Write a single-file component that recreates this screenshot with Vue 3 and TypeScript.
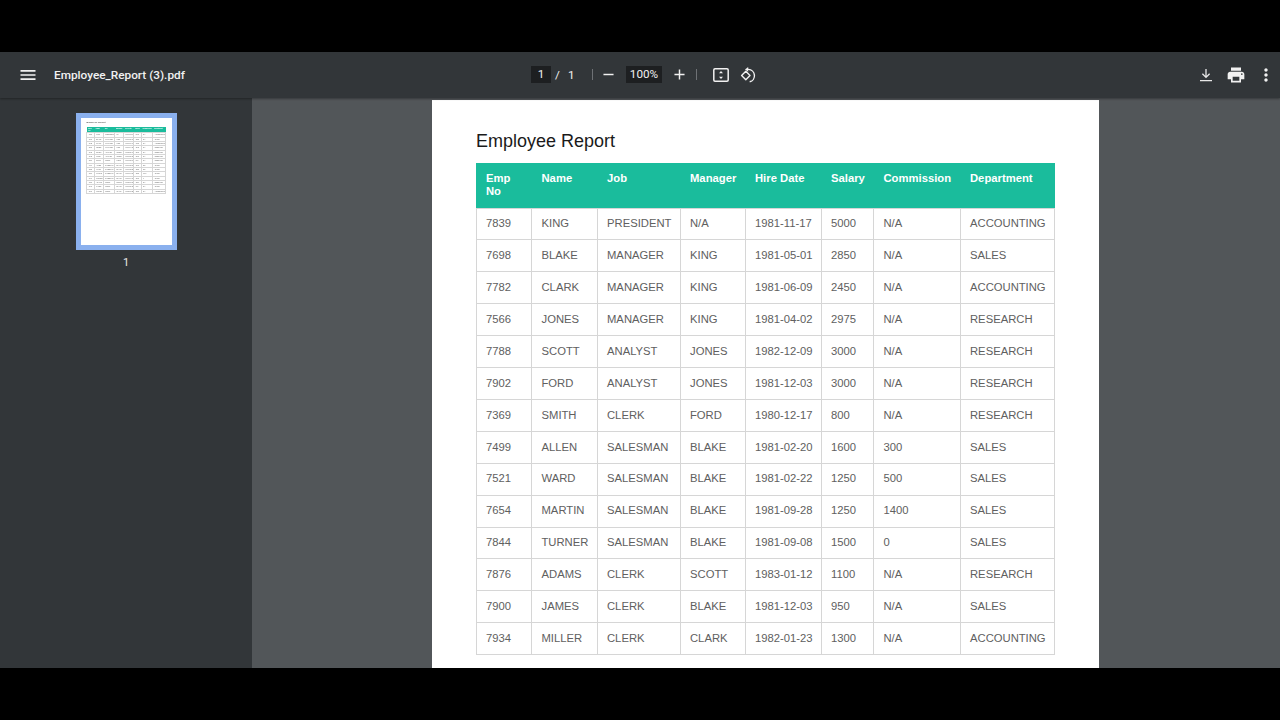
<script setup lang="ts">
interface Emp { no: number; name: string; job: string; mgr: string; date: string; sal: number; com: string; dept: string }
const headers: string[] = ['Emp No', 'Name', 'Job', 'Manager', 'Hire Date', 'Salary', 'Commission', 'Department']
const rows: Emp[] = [
  { no: 7839, name: 'KING', job: 'PRESIDENT', mgr: 'N/A', date: '1981-11-17', sal: 5000, com: 'N/A', dept: 'ACCOUNTING' },
  { no: 7698, name: 'BLAKE', job: 'MANAGER', mgr: 'KING', date: '1981-05-01', sal: 2850, com: 'N/A', dept: 'SALES' },
  { no: 7782, name: 'CLARK', job: 'MANAGER', mgr: 'KING', date: '1981-06-09', sal: 2450, com: 'N/A', dept: 'ACCOUNTING' },
  { no: 7566, name: 'JONES', job: 'MANAGER', mgr: 'KING', date: '1981-04-02', sal: 2975, com: 'N/A', dept: 'RESEARCH' },
  { no: 7788, name: 'SCOTT', job: 'ANALYST', mgr: 'JONES', date: '1982-12-09', sal: 3000, com: 'N/A', dept: 'RESEARCH' },
  { no: 7902, name: 'FORD', job: 'ANALYST', mgr: 'JONES', date: '1981-12-03', sal: 3000, com: 'N/A', dept: 'RESEARCH' },
  { no: 7369, name: 'SMITH', job: 'CLERK', mgr: 'FORD', date: '1980-12-17', sal: 800, com: 'N/A', dept: 'RESEARCH' },
  { no: 7499, name: 'ALLEN', job: 'SALESMAN', mgr: 'BLAKE', date: '1981-02-20', sal: 1600, com: '300', dept: 'SALES' },
  { no: 7521, name: 'WARD', job: 'SALESMAN', mgr: 'BLAKE', date: '1981-02-22', sal: 1250, com: '500', dept: 'SALES' },
  { no: 7654, name: 'MARTIN', job: 'SALESMAN', mgr: 'BLAKE', date: '1981-09-28', sal: 1250, com: '1400', dept: 'SALES' },
  { no: 7844, name: 'TURNER', job: 'SALESMAN', mgr: 'BLAKE', date: '1981-09-08', sal: 1500, com: '0', dept: 'SALES' },
  { no: 7876, name: 'ADAMS', job: 'CLERK', mgr: 'SCOTT', date: '1983-01-12', sal: 1100, com: 'N/A', dept: 'RESEARCH' },
  { no: 7900, name: 'JAMES', job: 'CLERK', mgr: 'BLAKE', date: '1981-12-03', sal: 950, com: 'N/A', dept: 'SALES' },
  { no: 7934, name: 'MILLER', job: 'CLERK', mgr: 'CLARK', date: '1982-01-23', sal: 1300, com: 'N/A', dept: 'ACCOUNTING' },
]
</script>

<template>
  <div class="screen">
    <div class="letterbox"></div>
    <header class="toolbar">
      <div class="left">
        <svg class="menu" viewBox="0 0 24 24" width="20" height="20"><path fill="#f1f1f1" d="M3 18h18v-2H3v2zm0-5h18v-2H3v2zm0-7v2h18V6H3z"/></svg>
        <span class="title">Employee_Report (3).pdf</span>
      </div>
      <div class="center">
        <span class="box page-box">1</span>
        <span class="slash">/</span>
        <span class="total">1</span>
        <span class="sep sep-a"></span>
        <svg class="minus" viewBox="0 0 12 12" width="11" height="11"><path d="M.5 6h11" stroke="#f1f1f1" stroke-width="1.6"/></svg>
        <span class="box zoom-box">100%</span>
        <svg class="plus" viewBox="0 0 12 12" width="11" height="11"><path d="M.5 6h11M6 .5v11" stroke="#f1f1f1" stroke-width="1.6"/></svg>
        <span class="sep sep-b"></span>
        <svg class="fit" viewBox="0 0 16 14" width="16" height="14">
          <rect x=".8" y=".8" width="14.4" height="12.4" rx="1.2" fill="none" stroke="#f1f1f1" stroke-width="1.5"/>
          <path d="M8 3l2 2.2H6zM8 11l2-2.2H6z" fill="#f1f1f1"/>
        </svg>
        <svg class="rotate" viewBox="0 0 16 16" width="16" height="16">
          <path d="M5.800 4.300 10 8.500 5.800 12.700 1.600 8.500z" fill="none" stroke="#f1f1f1" stroke-width="1.400" stroke-linejoin="round"/>
          <path d="M7 2.400h1.500a6.300 6.300 0 0 1 1.200 12.400" fill="none" stroke="#f1f1f1" stroke-width="1.400"/>
          <path d="M8.200 0 5 2.400 8.200 4.800z" fill="#f1f1f1"/>
        </svg>
      </div>
      <div class="right">
        <svg class="download" viewBox="0 0 14 14" width="14" height="14">
          <path d="M7 1v8M3.400 5.800 7 9.400l3.600-3.600M1 12.600h12" fill="none" stroke="#e8e8e8" stroke-width="1.300"/>
        </svg>
        <svg class="print" viewBox="0 0 24 24" width="20" height="20"><path fill="#f1f1f1" d="M19 8H5c-1.660 0-3 1.340-3 3v6h4v4h12v-4h4v-6c0-1.660-1.340-3-3-3zm-3 11H8v-5h8v5zm3-7c-.55 0-1-.45-1-1s.45-1 1-1 1 .45 1 1-.45 1-1 1zm-1-9H6v4h12V3z"/></svg>
        <svg class="more" viewBox="0 0 24 24" width="20" height="20"><path fill="#f1f1f1" d="M12 8c1.100 0 2-.9 2-2s-.9-2-2-2-2 .9-2 2 .9 2 2 2zm0 2c-1.100 0-2 .9-2 2s.9 2 2 2 2-.9 2-2-.9-2-2-2zm0 6c-1.100 0-2 .9-2 2s.9 2 2 2 2-.9 2-2-.9-2-2-2z"/></svg>
      </div>
    </header>
    <div class="body">
      <aside class="sidebar">
        <div class="thumb-frame">
          <div class="thumb-clip">
            <div class="sheet thumb-sheet">
              <h1>Employee Report</h1>
              <table>
                <thead><tr><th v-for="h in headers" :key="h">{{ h }}</th></tr></thead>
                <tbody>
                  <tr v-for="r in rows" :key="r.no">
                    <td>{{ r.no }}</td><td>{{ r.name }}</td><td>{{ r.job }}</td><td>{{ r.mgr }}</td><td>{{ r.date }}</td><td>{{ r.sal }}</td><td>{{ r.com }}</td><td>{{ r.dept }}</td>
                  </tr>
                </tbody>
              </table>
            </div>
          </div>
        </div>
        <div class="thumb-num">1</div>
      </aside>
      <main class="viewer">
        <div class="sheet page">
          <h1>Employee Report</h1>
          <table>
            <thead><tr><th v-for="h in headers" :key="h">{{ h }}</th></tr></thead>
            <tbody>
              <tr v-for="r in rows" :key="r.no">
                <td>{{ r.no }}</td><td>{{ r.name }}</td><td>{{ r.job }}</td><td>{{ r.mgr }}</td><td>{{ r.date }}</td><td>{{ r.sal }}</td><td>{{ r.com }}</td><td>{{ r.dept }}</td>
              </tr>
            </tbody>
          </table>
        </div>
      </main>
    </div>
    <div class="letterbox bottom"></div>
  </div>
</template>

<style>
html, body { margin: 0; background: #000; }
</style>

<style scoped>
.screen { width: 1280px; height: 720px; display: flex; flex-direction: column; background: #000; overflow: hidden; }
.letterbox { height: 52px; flex: none; background: #000; }
.toolbar {
  flex: none; height: 46px; padding-bottom: 1px; box-sizing: border-box; background: #323639; display: flex; align-items: center;
  font-family: Roboto, "Liberation Sans", sans-serif; color: #f1f1f1;
  box-shadow: 0 1px 2px rgba(0,0,0,.35); position: relative; z-index: 2;
}
.left { width: 531px; flex: none; display: flex; align-items: center; padding-left: 17.500px; box-sizing: border-box; }
.menu { flex: none; }
.title { margin-left: 16.500px; font-size: 11.800px; font-weight: 500; white-space: nowrap; }
.center { display: flex; align-items: center; flex: none; font-size: 11.700px; }
.box { background: #1d1f21; height: 17px; line-height: 17px; text-align: center; display: block; }
.page-box { width: 20px; }
.slash { margin-left: 4px; width: 5px; }
.total { margin-left: 8px; width: 6px; }
.sep { width: 1px; height: 11px; background: #6e7175; }
.sep-a { margin-left: 18px; }
.minus { margin-left: 10px; }
.zoom-box { margin-left: 12px; width: 36px; }
.plus { margin-left: 12px; }
.sep-b { margin-left: 11px; }
.fit { margin-left: 16px; }
.rotate { margin-left: 11px; }
.right { margin-left: auto; display: flex; align-items: center; padding-right: 4px; }
.print { margin-left: 13px; }
.more { margin-left: 10px; }
.body { flex: 1; display: flex; min-height: 0; }
.sidebar { width: 252px; flex: none; background: #323639; display: flex; flex-direction: column; align-items: center; box-sizing: border-box; padding-top: 15px; }
.thumb-frame { width: 101px; height: 137px; box-sizing: border-box; border: 5px solid #8ab0ee; background: #fff; overflow: hidden; }
.thumb-clip { width: 91px; height: 127px; overflow: hidden; filter: blur(.4px); }
.thumb-num { margin-top: 5px; font: 11px/15px Roboto, "Liberation Sans", sans-serif; color: #e8e8e8; }
.viewer { flex: 1; background: #525659; display: flex; justify-content: center; padding-top: 2px; overflow: hidden; min-width: 0; padding-right: 1px; box-sizing: border-box; }
.sheet { width: 667px; height: 943px; flex: none; background: #fff; box-sizing: border-box; padding: 31px 44px 0; font-family: "Liberation Sans", Arial, sans-serif; }
.thumb-sheet { zoom: .1364; }
h1 { margin: 0; height: 32px; font-size: 18px; line-height: 20px; font-weight: 400; color: #1a1a1a; }
table { width: 578.500px; margin-left: -.5px; border-collapse: collapse; table-layout: fixed; font-size: 11.250px; }
th { background: #1abc9c; color: #fff; font-weight: 700; text-align: left; vertical-align: top; padding: 9px 9px 0 10px; height: 45px; box-sizing: border-box; line-height: 13px; }
td { border: 1px solid #d6d6d6; color: #606060; padding: 0 9px 1.500px 9.500px; height: 31.920px; box-sizing: border-box; white-space: nowrap; overflow: hidden; }
th:nth-child(1) { width: 55.500px; }
th:nth-child(2) { width: 65.500px; }
th:nth-child(3) { width: 83px; }
th:nth-child(4) { width: 65px; }
th:nth-child(5) { width: 76px; }
th:nth-child(6) { width: 52.500px; }
th:nth-child(7) { width: 86.500px; }
th:nth-child(8) { width: 94.500px; }
.bottom { flex: none; height: 52px; }
</style>
